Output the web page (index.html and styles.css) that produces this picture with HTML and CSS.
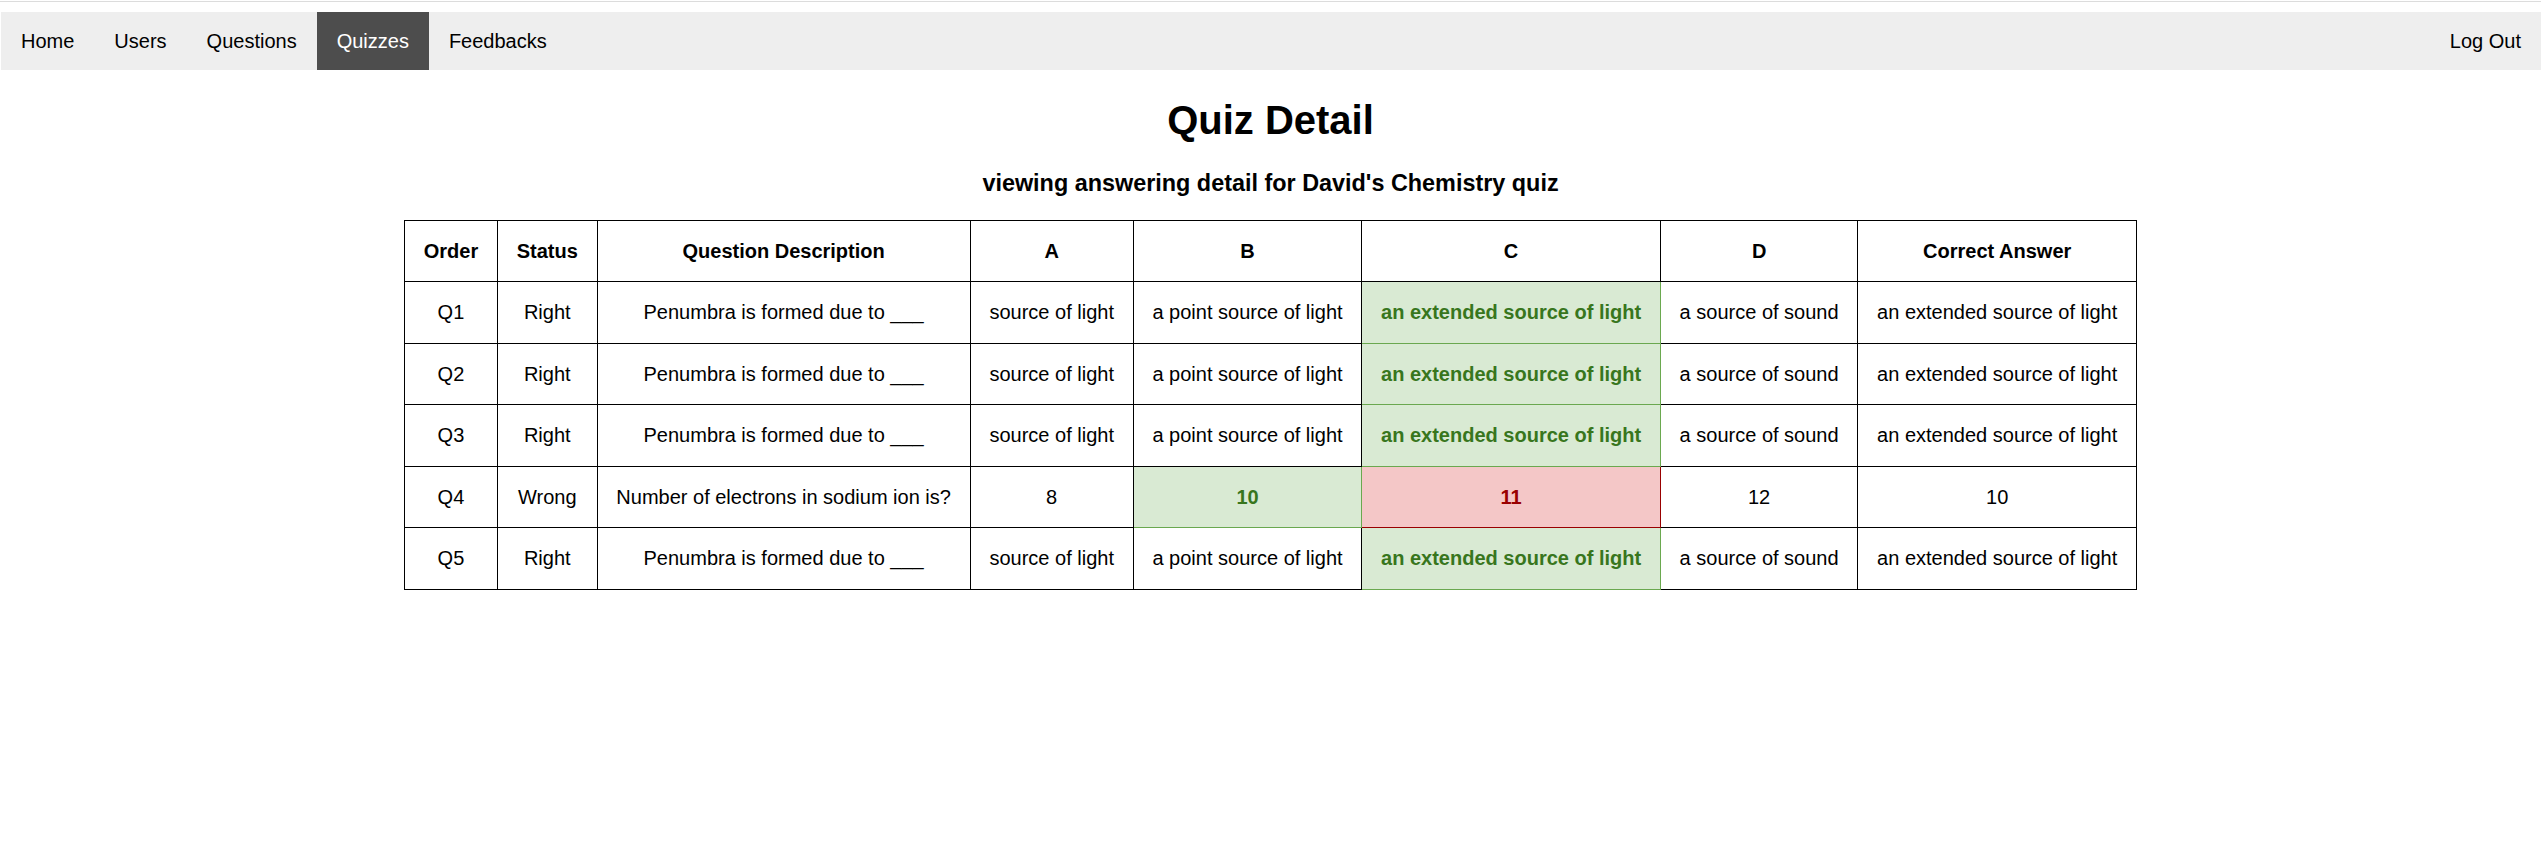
FILE: index.html
```html
<!DOCTYPE html>
<html lang="en">
<head>
<meta charset="utf-8">
<title>Quiz Detail</title>
<link rel="stylesheet" href="styles.css">
</head>
<body>
<div class="topline"></div>
<nav class="topnav">
  <div class="nav-left">
    <a href="#" class="nav-link">Home</a>
    <a href="#" class="nav-link">Users</a>
    <a href="#" class="nav-link">Questions</a>
    <a href="#" class="nav-link active">Quizzes</a>
    <a href="#" class="nav-link">Feedbacks</a>
  </div>
  <a href="#" class="nav-link">Log Out</a>
</nav>
<main class="content">
  <h1 class="title">Quiz Detail</h1>
  <h3 class="subtitle">viewing answering detail for David's Chemistry quiz</h3>
  <table class="quiz-table">
    <thead>
      <tr><th>Order</th><th>Status</th><th>Question Description</th><th>A</th><th>B</th><th>C</th><th>D</th><th>Correct Answer</th></tr>
    </thead>
    <tbody>
      <tr><td>Q1</td><td>Right</td><td>Penumbra is formed due to ___</td><td>source of light</td><td>a point source of light</td><td class="correct">an extended source of light</td><td>a source of sound</td><td>an extended source of light</td></tr>
      <tr><td>Q2</td><td>Right</td><td>Penumbra is formed due to ___</td><td>source of light</td><td>a point source of light</td><td class="correct">an extended source of light</td><td>a source of sound</td><td>an extended source of light</td></tr>
      <tr><td>Q3</td><td>Right</td><td>Penumbra is formed due to ___</td><td>source of light</td><td>a point source of light</td><td class="correct">an extended source of light</td><td>a source of sound</td><td>an extended source of light</td></tr>
      <tr><td>Q4</td><td>Wrong</td><td>Number of electrons in sodium ion is?</td><td>8</td><td class="correct">10</td><td class="wrong">11</td><td>12</td><td>10</td></tr>
      <tr><td>Q5</td><td>Right</td><td>Penumbra is formed due to ___</td><td>source of light</td><td>a point source of light</td><td class="correct">an extended source of light</td><td>a source of sound</td><td>an extended source of light</td></tr>
    </tbody>
  </table>
</main>
</body>
</html>
```
FILE: styles.css
```css
html, body {
  margin: 0;
  padding: 0;
  background: #fff;
}
body {
  font-family: "Liberation Sans", Arial, Helvetica, sans-serif;
  font-size: 20px;
  color: #000;
}
.topline {
  margin-top: 1px;
  height: 1px;
  background: #dcdcdc;
}
.topnav {
  margin-top: 10px;
  margin-left: 1px;
  display: flex;
  justify-content: space-between;
  background: #eeeeee;
}
.nav-left {
  display: flex;
}
.nav-link {
  display: block;
  padding: 17.5px 20px;
  font-size: 20px;
  line-height: 23px;
  color: #000;
  text-decoration: none;
}
.nav-link.active {
  background: #4d4d4d;
  color: #fff;
}
.content {
  text-align: center;
}
.title {
  font-size: 40px;
  line-height: 46px;
  margin: 26.8px 0;
  font-weight: bold;
}
.subtitle {
  font-size: 23.4px;
  line-height: 27px;
  margin: 23.4px 0;
  font-weight: bold;
}
.quiz-table {
  margin: 0 auto;
  border-collapse: collapse;
}
.quiz-table th,
.quiz-table td {
  border: 1px solid #000;
  padding: 18.75px;
  font-size: 20px;
  line-height: 23px;
  text-align: center;
  white-space: nowrap;
}
.quiz-table th {
  font-weight: bold;
}
.quiz-table td.correct {
  background: #d9ead3;
  color: #38761d;
  font-weight: bold;
  border-color: #6aa84f;
}
.quiz-table td.wrong {
  background: #f4c7c7;
  color: #990000;
  font-weight: bold;
  border-color: #990000;
}
```
